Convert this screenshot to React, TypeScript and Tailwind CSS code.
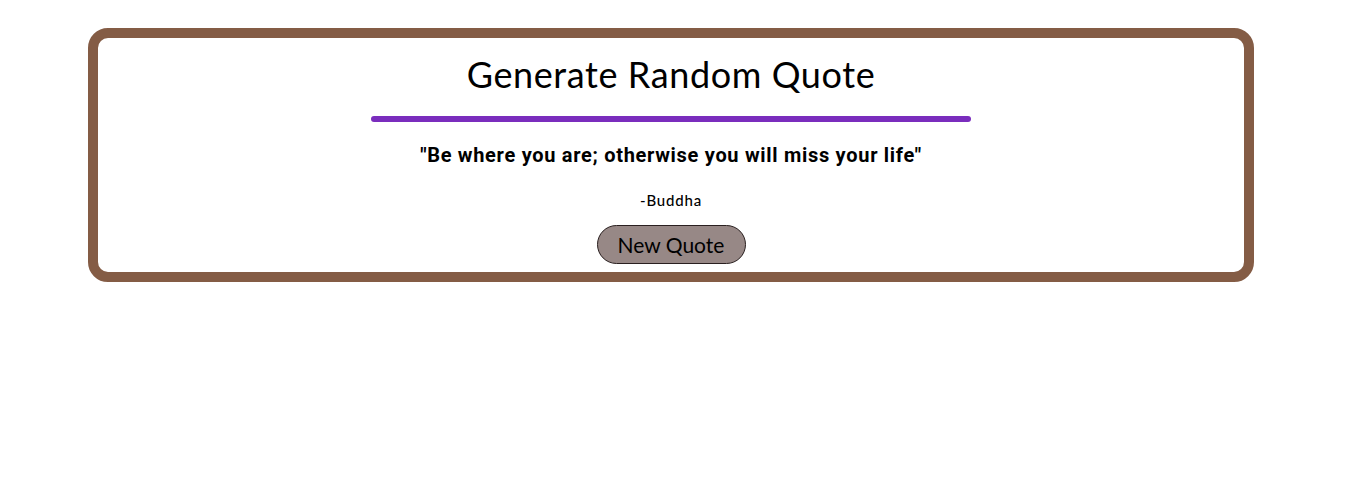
export default function App() {
  return (
    <div className="min-h-[486px] bg-white pt-[28px]">
      <div className="ml-[88px] flex h-[254px] w-[1166px] flex-col items-center rounded-[20px] border-[10px] border-[#845c45] bg-white">
        <h1 className="mt-[14px] font-['Lato',sans-serif] text-[36px] leading-[44px] tracking-[0.6px] text-black">
          Generate Random Quote
        </h1>
        <div className="mt-[20px] h-[6px] w-[600px] rounded-full bg-[#7a2dbd]" />
        <p className="mt-[21px] font-['Roboto',sans-serif] text-[20px] leading-[24px] font-bold tracking-[0.7px] text-black">
          "Be where you are; otherwise you will miss your life"
        </p>
        <p className="mt-[24px] font-['Lato',sans-serif] text-[15px] leading-[18px] font-medium tracking-[0.8px] text-black">
          -Buddha
        </p>
        <button className="mt-[16px] h-[39px] w-[149px] rounded-full border-[1.5px] border-[#2a2020] bg-[#978886] font-['Lato',sans-serif] text-[21px] leading-none text-black">
          New Quote
        </button>
      </div>
    </div>
  );
}
